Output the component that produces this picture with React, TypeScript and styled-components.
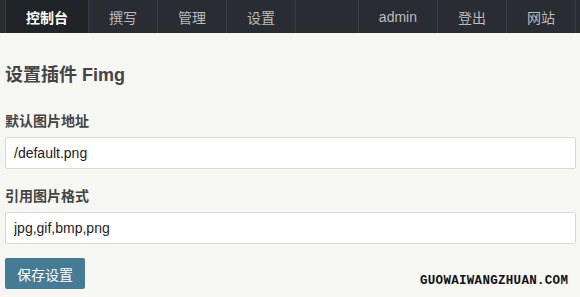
import React from "react";
import styled, { createGlobalStyle } from "styled-components";

const Global = createGlobalStyle`
  html, body { margin: 0; padding: 0; background: #f6f6f3; }
  body {
    font-family: "Liberation Sans", Arial, "Noto Sans CJK SC", sans-serif;
    font-size: 14px;
    color: #444;
  }
  * { box-sizing: border-box; }
`;

const Page = styled.div`
  position: relative;
  width: 580px;
  height: 297px;
  overflow: hidden;
`;

const Nav = styled.nav`
  height: 33px;
  background: #292d33;
  display: flex;
  justify-content: space-between;
  padding: 0 4px 0 5px;
`;

const NavGroup = styled.div`
  display: flex;
`;

const NavItem = styled.a<{ $active?: boolean; $first?: boolean; $last?: boolean; $right?: boolean }>`
  display: flex;
  align-items: center;
  height: 33px;
  padding: 0 20px;
  font-size: 14px;
  color: ${(p) => (p.$active ? "#fff" : "#bbb")};
  font-weight: ${(p) => (p.$active ? "bold" : "normal")};
  background: ${(p) => (p.$active ? "#202328" : "transparent")};
  border-right: ${(p) => (p.$right && !p.$last ? "0" : "1px solid #383d45")};
  border-left: ${(p) => (p.$first || p.$right ? "1px solid #383d45" : "0")};
  text-decoration: none;
`;

const Main = styled.main`
  padding: 0 4px 0 5px;
`;

const Title = styled.h2`
  margin: 0;
  padding-top: 30px;
  font-size: 18px;
  line-height: 24px;
  font-weight: bold;
  color: #444;
`;

const Field = styled.div`
  display: flex;
  flex-direction: column;
`;

const Label = styled.label<{ $top: number }>`
  display: block;
  margin-top: ${(p) => p.$top}px;
  font-size: 14px;
  line-height: 20px;
  font-weight: bold;
  color: #444;
`;

const Input = styled.input`
  display: block;
  width: 100%;
  height: 32px;
  margin-top: 6px;
  padding: 0 8px;
  border: 1px solid #d9d9d6;
  border-radius: 2px;
  background: #fff;
  font-family: "Liberation Sans", Arial, sans-serif;
  font-size: 14px;
  color: #222;
  outline: none;
`;

const Button = styled.button`
  margin-top: 14px;
  width: 80px;
  height: 31px;
  border: 0;
  border-radius: 2px;
  background: #467b96;
  color: #fff;
  font-family: "Liberation Sans", Arial, "Noto Sans CJK SC", sans-serif;
  font-size: 14px;
  padding: 0;
`;

const Watermark = styled.div`
  position: absolute;
  left: 420px;
  top: 275px;
  font-family: "Liberation Mono", "DejaVu Sans Mono", monospace;
  font-weight: bold;
  font-size: 12.5px;
  letter-spacing: 0.3px;
  color: #111;
  line-height: 12px;
`;

export default function App() {
  return (
    <Page>
      <Global />
      <Nav>
        <NavGroup>
          <NavItem $active $first>控制台</NavItem>
          <NavItem>撰写</NavItem>
          <NavItem>管理</NavItem>
          <NavItem>设置</NavItem>
        </NavGroup>
        <NavGroup>
          <NavItem $right>admin</NavItem>
          <NavItem $right>登出</NavItem>
          <NavItem $right $last>网站</NavItem>
        </NavGroup>
      </Nav>
      <Main>
        <Title>设置插件 Fimg</Title>
        <Field>
          <Label $top={24}>默认图片地址</Label>
          <Input defaultValue="/default.png" />
        </Field>
        <Field>
          <Label $top={17}>引用图片格式</Label>
          <Input defaultValue="jpg,gif,bmp,png" />
        </Field>
        <Button>保存设置</Button>
      </Main>
      <Watermark>GUOWAIWANGZHUAN.COM</Watermark>
    </Page>
  );
}
